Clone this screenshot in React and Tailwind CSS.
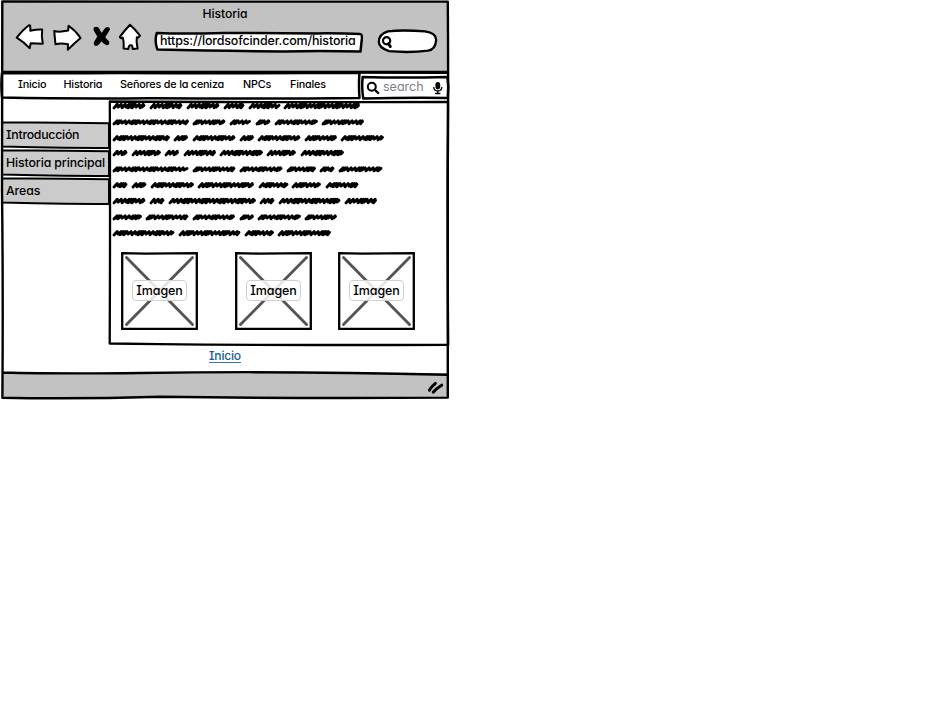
import React from "react";

const NAV = [
  ["Inicio", "w-[45.5px]"],
  ["Historia", "w-[56.5px]"],
  ["Señores de la ceniza", "w-[123px]"],
  ["NPCs", "w-[47px]"],
  ["Finales", "w-[40px]"],
];

// Each row of body copy, as the widths of its scribbled words.
const ROWS = [
  [32, 32, 32, 20, 31, 75.5],
  [75.5, 32, 20.5, 14, 42.5, 41.5],
  [56.5, 13.5, 42, 13.5, 42, 31.5, 42.5],
  [14, 28.5, 13.5, 31.5, 42.5, 28.5, 42.5],
  [75, 42, 42, 28.5, 14, 43],
  [14, 14, 42.5, 55.5, 29, 28.5, 32],
  [32, 14, 86.5, 14, 61, 31.5],
  [28.5, 42, 41.5, 13.5, 42.5, 31.5],
  [61, 61, 28.5, 52.5],
];

function Outline({ w, h, d, sw = 2.4, className = "" }) {
  return (
    <svg
      className={"pointer-events-none absolute left-0 top-0 overflow-visible " + className}
      width={w}
      height={h}
      fill="none"
      stroke="#000"
      strokeWidth={sw}
      strokeLinejoin="round"
      strokeLinecap="round"
    >
      <path d={d} />
    </svg>
  );
}

function Scribble({ width, seed }) {
  let d = "M1 9.9";
  let x = 1;
  let i = 0;
  while (x < width - 4) {
    const up = 6.2 + ((i * 3 + seed) % 3) * 0.35;
    d += ` L${(x + 3.2).toFixed(1)} ${up}`;
    x += Math.floor((i + seed * 2) / 3) % 2 === 0 ? 4 : 2;
    const nx = Math.min(x, width - 3);
    d += ` L${nx.toFixed(1)} ${(9.1 + ((i + seed) % 2) * 0.7).toFixed(1)}`;
    i += 1;
  }
  d += ` L${width - 1} 7.4`;
  return (
    <svg width={width} height="16" className="block shrink-0 overflow-visible" fill="none" stroke="#000" strokeWidth="2.9" strokeLinecap="round" strokeLinejoin="round">
      <path d={d} />
    </svg>
  );
}

function Imagen() {
  return (
    <div className="relative flex h-[79px] w-[78px] items-center justify-center bg-white">
      <svg className="absolute inset-0" width="78" height="79" fill="none">
        <path d="M6.5 6.5 L72.5 73.5 M72.5 6.5 L6.5 73.5" stroke="#555" strokeWidth="2.9" strokeLinecap="round" />
        <path d="M2.2 2.2 L25 2.6 L76.8 2.2 L76.8 78 L40 78 L2.2 78 Z" stroke="#000" strokeWidth="2.3" />
      </svg>
      <span className="relative mt-px flex h-[21px] w-[55px] items-center justify-center rounded-[4px] border border-[#cfcfcf] bg-white/85 pl-px pt-px text-[12.5px] font-medium tracking-[-0.1px]">
        Imagen
      </span>
    </div>
  );
}

function Toolbar() {
  return (
    <div className="flex h-[44px] items-start pl-[13px] pt-px">
      <svg width="128" height="34" fill="none" stroke="#000" strokeWidth="2" strokeLinejoin="round" strokeLinecap="round" className="-mt-[0.5px] shrink-0">
        <g fill="#fff">
          <path d="M1.7 14.6 Q8 6.5 14 2.2 Q15.7 1.6 15.3 7.7 Q21 6.4 27.2 6.6 Q26.2 13 27.8 20.8 L15.7 20.2 L14.6 25.2 Q9 19 1.7 14.6Z" />
          <path d="M39.2 8 Q44 9.6 53.2 7.6 L53.5 2.8 Q61 8 65.6 15 Q59 20.5 52.8 26.8 L53 21.3 Q46 19.8 40.5 21.3 Q39.8 14 39.2 8Z" />
          <path d="M115 1.7 Q120 6 125 12.7 Q123 15.5 121.8 14.2 Q121 19 122.6 25.5 L117.7 26 Q117.5 22 116 22.4 Q113.8 21.5 113.4 26 L108.6 25.6 Q109 18 107.7 14.6 Q105.8 16 104.8 13.8 Q110 7 115 1.7Z" />
        </g>
        <path
          fill="#000"
          strokeWidth="1.2"
          d="M79.6 4.8 Q82.5 3.6 84 6.4 Q85.3 9.6 87 10.8 Q89 6.2 91.8 4.6 Q94.6 4.2 94.3 6.6 Q91.8 10.6 89.6 14 Q91 16.8 93.6 18.8 Q94.4 21.4 91.6 21.6 Q88.6 20.4 86.4 17.4 Q84.2 20.6 82 22.2 Q78.8 22.6 79.4 19.6 Q81.4 16.4 83 13.4 Q80.6 10 79.2 7 Q78.8 5.4 79.6 4.8Z"
        />
      </svg>
      <div className="relative ml-[11px] mt-[7.5px] flex h-[22px] w-[209px] shrink-0 items-center">
        <svg className="absolute inset-0" width="209" height="22" fill="#fff" stroke="#000" strokeWidth="2.5" strokeLinejoin="round">
          <path d="M2.8 2 Q30 3.2 70 1.9 Q120 2.2 162 2.4 Q190 2.2 206 3 Q208.8 3 207.6 10 L206.5 20.5 Q170 19.8 130 20.4 Q60 20 3.4 18.6 Q0.2 10 2.8 2Z" />
        </svg>
        <span className="relative -mt-[1px] ml-[6px] whitespace-nowrap text-[12.5px] font-medium leading-none tracking-[-0.16px]">
          https://lordsofcinder.com/historia
        </span>
      </div>
      <svg className="ml-[14px] mt-[5px] shrink-0" width="62" height="26" fill="#fff" stroke="#000" strokeLinejoin="round" strokeLinecap="round">
        <path strokeWidth="2.3" d="M11 3.4 Q25 1.6 48 3.4 Q60 5 59 12.9 Q58.5 21.4 51 22.7 Q33 25 12 23.2 Q2 20 1.8 13.9 Q2 6 11 3.4Z" />
        <circle cx="9.6" cy="12.8" r="3.6" strokeWidth="2.2" />
        <path d="M11.4 15.6 L13.4 18.6" strokeWidth="2.8" />
      </svg>
    </div>
  );
}

function SideItem({ label, tracking }) {
  return (
    <div className="relative flex h-[28px] w-[109px] items-start">
      <svg className="absolute inset-0 overflow-visible" width="109" height="28" fill="#cbcbcb" stroke="#000" strokeWidth="2" strokeLinejoin="round">
        <path d="M2 0.6 Q40 0 109 1.2 L109 26 Q70 26.2 35 25.2 L2 24.6Z" />
      </svg>
      <span className={"relative ml-[6px] mt-[5px] whitespace-nowrap text-[12.3px] font-medium leading-[16px] " + tracking}>{label}</span>
    </div>
  );
}

export default function App() {
  return (
    <div className="h-[725px] w-[926px] overflow-hidden bg-white text-black font-['Inter','Noto_Sans',sans-serif] [font-feature-settings:'cv11','cv08']">
      <div className="relative flex h-[400px] w-[450px] flex-col">
        <header className="ml-[2px] mt-[2px] flex h-[71px] w-[446px] flex-col bg-[#c2c2c2]">
          <h1 className="h-[20px] pt-[4px] text-center text-[12.2px] font-medium leading-[16px] tracking-[-0.05px]">Historia</h1>
          <Toolbar />
        </header>

        <div className="flex h-[27px] w-[450px]">
          <nav className="relative flex h-[27px] w-[361px] items-center bg-white pl-[18px] text-[10.8px] font-medium tracking-[-0.19px]">
            <Outline w={361} h={27} sw={2.5} d="M2 0 Q60 0.6 120 -0.1 Q240 0.5 359.5 -0.3 Q358.5 12 359.5 25 Q260 26.1 150 25.2 Q70 25.8 2 24.5 Q0.8 12 2 0Z" />
            {NAV.map(([label, width]) => (
              <a key={label} className={"mt-[-2px] shrink-0 whitespace-nowrap " + width}>{label}</a>
            ))}
          </nav>
          <div className="relative flex h-[27px] w-[89px] items-center bg-white">
            <Outline w={89} h={27} sw={2.5} d="M1.7 4 Q40 5 86.5 4 Q88 14 86.8 25 Q45 24.5 2.3 25.6 Q0.4 14 1.7 4Z M0 -0.5 L86 -0.2" />
            <svg className="ml-[5px] mt-[2px] shrink-0" width="14" height="14" fill="none" stroke="#000" strokeLinecap="round">
              <circle cx="5.8" cy="5.8" r="4" strokeWidth="2" />
              <path d="M8.8 8.8 L12.2 12" strokeWidth="2.3" />
            </svg>
            <span className="ml-[3px] mt-[1px] w-[48px] text-[12.6px] tracking-[-0.05px] text-[#80808a]">search</span>
            <svg className="mt-[2px] shrink-0" width="14" height="14" fill="none" stroke="#000">
              <rect x="4.4" y="1" width="4.8" height="7.4" rx="2.4" fill="#000" stroke="none" />
              <path d="M2.8 6 Q2.9 10 6.8 10 Q10.7 10 10.8 6 M6.8 10 V12.4 M4.2 12.5 H9.4" strokeWidth="1.3" />
            </svg>
          </div>
        </div>

        <main className="flex h-[245px]">
          <aside className="flex w-[109px] flex-col pt-[22px]">
            <SideItem label="Introducción" tracking="tracking-[-0.25px]" />
            <SideItem label="Historia principal" tracking="tracking-[-0.1px]" />
            <SideItem label="Areas" tracking="tracking-[-0.1px]" />
          </aside>
          <section className="relative h-[245px] w-[340px]">
            <Outline w={340} h={245} sw={2.3} d="M0.8 1.5 Q160 2.5 339 1.8 Q338.2 120 339.2 244.8 Q160 245.4 50 244.2 L0.7 243.5 Q1.3 120 0.8 1.5Z" />
            <div className="-mt-[2px] pl-[4px]">
              {ROWS.map((row, r) => (
                <div key={r} className="flex h-[15.83px] gap-[4.9px]">
                  {row.map((width, i) => (
                    <Scribble key={i} width={width} seed={r * 2 + i * 3} />
                  ))}
                </div>
              ))}
            </div>
            <div className="mt-[10.5px] flex pl-[11px]">
              <Imagen />
              <div className="ml-[36px]"><Imagen /></div>
              <div className="ml-[25px]"><Imagen /></div>
            </div>
          </section>
        </main>

        <div className="flex h-[28px] justify-center pt-[4px]">
          <a className="h-[14px] border-b border-[#3677ad] text-[12.1px] font-medium leading-[14px] tracking-[-0.2px] text-[#165c99]">Inicio</a>
        </div>
        <footer className="ml-[2px] flex h-[25px] w-[446px] justify-end bg-[#c2c2c2] pr-[4px] pt-[7px]">
          <svg width="17" height="15" fill="none" stroke="#000" strokeWidth="3" strokeLinecap="round">
            <path d="M2.4 10.2 Q4.5 6.5 8.4 3.4 M6.2 12.2 Q9 8.7 14.7 5.2" />
          </svg>
        </footer>
        <Outline w={450} h={400} sw={2.4} d="M2.3 1.5 Q120 1.2 220 1.6 L447.8 1.6 Q448.5 90 447.7 180 Q448.2 300 447.8 397.6 Q300 398.7 160 396.7 Q80 399.2 2.4 397.8 Q3.2 290 2 190 Q2.4 100 2.3 1.5Z M2.5 72 L447 72 M2.5 372.5 Q60 374 140 373 Q290 370.7 447 374.8" />
      </div>
    </div>
  );
}
